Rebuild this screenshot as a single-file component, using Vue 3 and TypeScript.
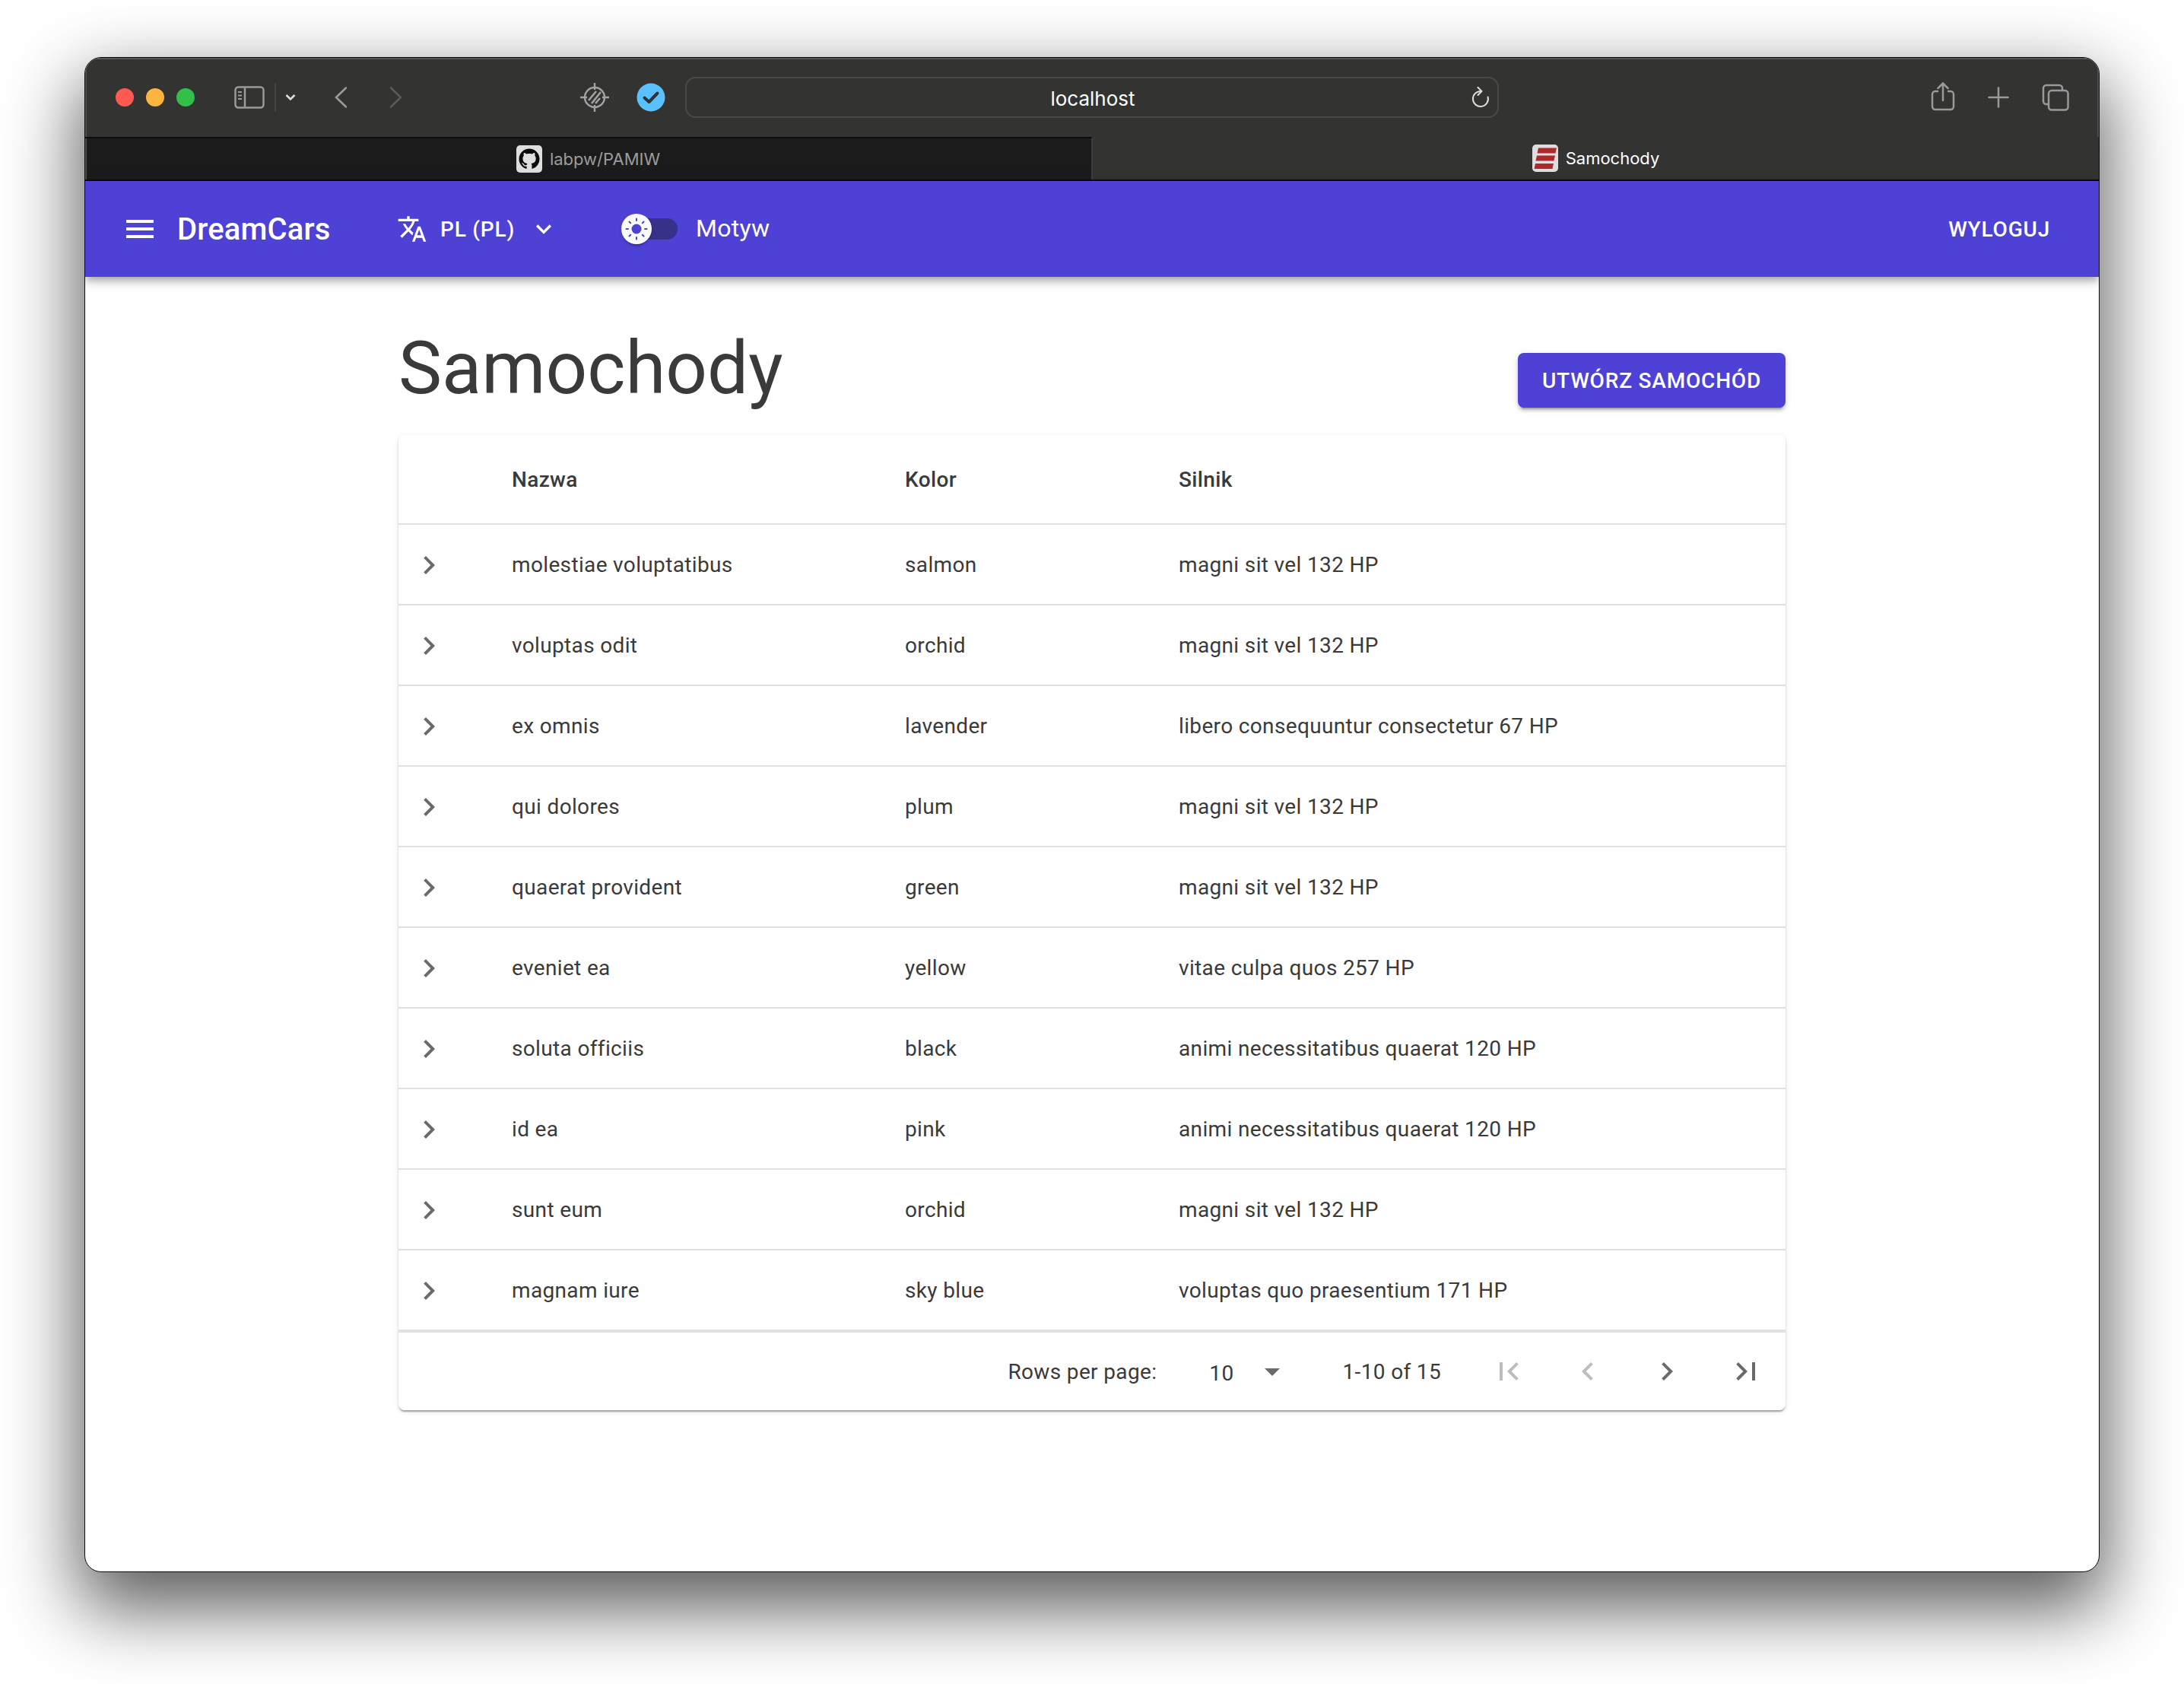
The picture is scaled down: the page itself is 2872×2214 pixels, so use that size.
<script setup lang="ts">
type Car = { name: string; color: string; engine: string };

const cars: Car[] = [
  { name: "molestiae voluptatibus", color: "salmon", engine: "magni sit vel 132 HP" },
  { name: "voluptas odit", color: "orchid", engine: "magni sit vel 132 HP" },
  { name: "ex omnis", color: "lavender", engine: "libero consequuntur consectetur 67 HP" },
  { name: "qui dolores", color: "plum", engine: "magni sit vel 132 HP" },
  { name: "quaerat provident", color: "green", engine: "magni sit vel 132 HP" },
  { name: "eveniet ea", color: "yellow", engine: "vitae culpa quos 257 HP" },
  { name: "soluta officiis", color: "black", engine: "animi necessitatibus quaerat 120 HP" },
  { name: "id ea", color: "pink", engine: "animi necessitatibus quaerat 120 HP" },
  { name: "sunt eum", color: "orchid", engine: "magni sit vel 132 HP" },
  { name: "magnam iure", color: "sky blue", engine: "voluptas quo praesentium 171 HP" },
];

const sunRays = [0, 45, 90, 135, 180, 225, 270, 315];
</script>

<template>
  <div class="screen">
    <div class="window">
      <div class="toolbar">
        <span class="dot red"></span>
        <span class="dot yellow"></span>
        <span class="dot green"></span>

        <svg class="t-sidebar" width="40" height="30" viewBox="0 0 40 30" fill="none" stroke="#9a9a9a" stroke-width="2.5">
          <rect x="1.5" y="1.5" width="37" height="27" rx="4" />
          <path d="M14 1.5v27" />
          <path d="M5 8h5M5 12.5h5M5 17h5" stroke-width="2" />
        </svg>
        <span class="t-sep"></span>
        <svg class="t-caret" width="14" height="10" viewBox="0 0 14 10" fill="none" stroke="#dcdcdc" stroke-width="2.6">
          <path d="M1.5 2l5.5 5.5L12.5 2" />
        </svg>
        <svg class="t-back" width="16" height="28" viewBox="0 0 16 28" fill="none" stroke="#9a9a9a" stroke-width="2.6" stroke-linecap="round">
          <path d="M15 1.5L2 14l13 12.5" />
        </svg>
        <svg class="t-forward" width="16" height="28" viewBox="0 0 16 28" fill="none" stroke="#5a5a5a" stroke-width="2.6" stroke-linecap="round">
          <path d="M1 1.5L14 14 1 26.5" />
        </svg>

        <svg class="t-target" width="38" height="38" viewBox="0 0 38 38" fill="none" stroke="#a3a3a3" stroke-width="2.4">
          <circle cx="19" cy="19" r="13" />
          <path d="M19 0v9M19 29v9M0 19h9M29 19h9" />
          <path d="M11 23l10-12M15 27l12-15M20 27l6-7" stroke-width="2.6" />
        </svg>
        <svg class="t-check" width="38" height="38" viewBox="0 0 38 38">
          <circle cx="19" cy="19" r="18.5" fill="#5ac0fe" />
          <path d="M10.5 19.5l6 5.5 11-11.5" fill="none" stroke="#2f3238" stroke-width="4" stroke-linecap="round" stroke-linejoin="round" />
        </svg>

        <div class="url">
          <span class="url-text">localhost</span>
          <svg class="url-reload" width="24" height="28" viewBox="0 0 24 28" fill="none" stroke="#dcdcdc" stroke-width="2" stroke-linecap="round" stroke-linejoin="round">
            <path d="M21.6 13.5A10 10 0 1 1 12 6" />
            <path d="M8.5 1l5 5-5 5" />
          </svg>
        </div>

        <svg class="t-share" width="32" height="38" viewBox="0 0 32 38" fill="none" stroke="#9a9a9a" stroke-width="2.5" stroke-linecap="round">
          <path d="M9 12H6a4 4 0 0 0-4 4v16a4 4 0 0 0 4 4h20a4 4 0 0 0 4-4V16a4 4 0 0 0-4-4h-3" />
          <path d="M16 24V2M9.5 8L16 1.5 22.5 8" />
        </svg>
        <svg class="t-plus" width="28" height="28" viewBox="0 0 28 28" fill="none" stroke="#9a9a9a" stroke-width="2.5" stroke-linecap="round">
          <path d="M14 1.5v25M1.5 14h25" />
        </svg>
        <svg class="t-tabs" width="36" height="36" viewBox="0 0 36 36" fill="none" stroke="#9a9a9a" stroke-width="2.5">
          <path d="M8 27H6a4 4 0 0 1-4-4V6a4 4 0 0 1 4-4h17a4 4 0 0 1 4 4v2" />
          <rect x="9" y="9" width="25.5" height="25.5" rx="4" />
        </svg>
      </div>

      <div class="tabs">
        <div class="tab inactive">
          <svg class="favicon" width="34" height="36" viewBox="0 0 34 36">
            <rect width="34" height="36" rx="5" fill="#dedede" />
            <g transform="translate(3.5 4.5) scale(1.69)">
              <path fill="#0b0b0b" d="M8 0C3.58 0 0 3.58 0 8c0 3.54 2.29 6.53 5.47 7.59.4.07.55-.17.55-.38 0-.19-.01-.82-.01-1.49-2.01.37-2.53-.49-2.69-.94-.09-.23-.48-.94-.82-1.13-.28-.15-.68-.52-.01-.53.63-.01 1.08.58 1.23.82.72 1.21 1.87.87 2.33.66.07-.52.28-.87.51-1.07-1.78-.2-3.64-.89-3.64-3.95 0-.87.31-1.59.82-2.15-.08-.2-.36-1.02.08-2.12 0 0 .67-.21 2.2.82.64-.18 1.32-.27 2-.27.68 0 1.36.09 2 .27 1.53-1.04 2.2-.82 2.2-.82.44 1.1.16 1.92.08 2.12.51.56.82 1.27.82 2.15 0 3.07-1.87 3.75-3.65 3.95.29.25.54.73.54 1.48 0 1.07-.01 1.93-.01 2.2 0 .21.15.46.55.38A8.013 8.013 0 0016 8c0-4.42-3.58-8-8-8z" />
            </g>
          </svg>
          <span class="tab-label">labpw/PAMIW</span>
        </div>
        <div class="tab active">
          <svg class="favicon" width="34" height="36" viewBox="0 0 34 36">
            <rect width="34" height="36" rx="5" fill="#dedede" />
            <path d="M8 4.5h24l-1.6 7H6.5zM6 14.5h24l-1.6 7H4.5zM4 25h24l-1.6 7H2.5z" fill="#ad2a2c" />
          </svg>
          <span class="tab-label">Samochody</span>
        </div>
      </div>

      <header class="appbar">
        <svg class="menu" width="48" height="48" viewBox="0 0 24 24" fill="#fff">
          <path d="M3 18h18v-2H3v2zm0-5h18v-2H3v2zm0-7v2h18V6H3z" />
        </svg>
        <span class="brand">DreamCars</span>
        <svg class="lang-icon" width="40" height="40" viewBox="0 0 24 24" fill="#fff">
          <path d="m12.87 15.07-2.54-2.51.03-.03c1.74-1.94 2.98-4.17 3.71-6.53H17V4h-7V2H8v2H1v1.99h11.17C11.5 7.92 10.44 9.75 9 11.35 8.07 10.32 7.3 9.19 6.69 8h-2c.73 1.63 1.73 3.17 2.98 4.56l-5.09 5.02L4 19l5-5 3.11 3.11.76-2.04zM18.5 10h-2L12 22h2l1.12-3h4.75L21 22h2l-4.5-12zm-2.62 7 1.62-4.33L19.12 17h-3.24z" />
        </svg>
        <span class="lang">PL (PL)</span>
        <svg class="lang-caret" width="40" height="40" viewBox="0 0 24 24" fill="#fff">
          <path d="M16.59 8.59 12 13.17 7.41 8.59 6 10l6 6 6-6z" />
        </svg>
        <div class="switch">
          <span class="track"></span>
          <span class="thumb">
            <svg width="40" height="40" viewBox="0 0 40 40">
              <circle cx="20" cy="20" r="6.5" fill="#4d41d6" />
              <rect
                v-for="a in sunRays"
                :key="a"
                x="19"
                y="5.5"
                width="2"
                height="4.5"
                rx="1"
                fill="#4d41d6"
                :transform="`rotate(${a} 20 20)`"
              />
            </svg>
          </span>
        </div>
        <span class="theme-label">Motyw</span>
        <span class="logout">Wyloguj</span>
      </header>

      <main class="content">
        <div class="title-row">
          <h1 class="title">Samochody</h1>
          <button class="create">Utwórz samochód</button>
        </div>

        <div class="card">
          <div class="row head">
            <span></span>
            <span>Nazwa</span>
            <span>Kolor</span>
            <span>Silnik</span>
          </div>
          <div v-for="car in cars" :key="car.name" class="row">
            <svg class="expand" width="48" height="48" viewBox="0 0 24 24">
              <path d="M8.59 16.59 13.17 12 8.59 7.41 10 6l6 6-6 6z" />
            </svg>
            <span>{{ car.name }}</span>
            <span>{{ car.color }}</span>
            <span>{{ car.engine }}</span>
          </div>
          <div class="footer">
            <span>Rows per page:</span>
            <span class="per-page">10</span>
            <svg class="drop" width="48" height="48" viewBox="0 0 24 24">
              <path d="m7 10 5 5 5-5z" />
            </svg>
            <span class="range">1-10 of 15</span>
            <div class="pager">
              <svg class="off" width="48" height="48" viewBox="0 0 24 24">
                <path d="M18.41 16.59 13.82 12l4.59-4.59L17 6l-6 6 6 6zM6 6h2v12H6z" />
              </svg>
              <svg class="off" width="48" height="48" viewBox="0 0 24 24">
                <path d="M15.41 16.59 10.83 12l4.58-4.59L14 6l-6 6 6 6z" />
              </svg>
              <svg width="48" height="48" viewBox="0 0 24 24">
                <path d="M8.59 16.59 13.17 12 8.59 7.41 10 6l6 6-6 6z" />
              </svg>
              <svg width="48" height="48" viewBox="0 0 24 24">
                <path d="M5.59 7.41 10.18 12l-4.59 4.59L7 18l6-6-6-6zM16 6h2v12h-2z" />
              </svg>
            </div>
          </div>
        </div>
      </main>
    </div>
  </div>
</template>

<style>
html, body { margin: 0; background: #fff; overflow: hidden; }
</style>

<style scoped>
.screen { box-sizing: border-box; width: 2872px; height: 2214px; padding: 75px 111px 147px; font-family: Roboto, "Liberation Sans", sans-serif; }
.window { box-sizing: border-box; height: 1992px; border: 1px solid #0c0c0c; border-radius: 22px; overflow: hidden; background: #fff; box-shadow: 0 40px 96px 8px rgba(0,0,0,.64); display: flex; flex-direction: column; }

.toolbar { box-sizing: border-box; height: 104px; flex: none; display: flex; align-items: center; background: #333332; padding: 0 0 0 40px; box-shadow: inset 0 2px 0 #565656, inset 2px 0 0 #4e4e4e, inset -2px 0 0 #4e4e4e; }
.dot { width: 24px; height: 24px; border-radius: 50%; margin-right: 16px; flex: none; }
.red { background: #ff5a52; }
.yellow { background: #fdb53f; }
.green { background: #32c04b; }
.toolbar svg { flex: none; }
.t-sidebar { margin-left: 36px; }
.t-sep { width: 2px; height: 36px; margin-left: 13px; background: #464646; flex: none; }
.t-caret { margin-left: 12px; }
.t-back { margin-left: 51px; }
.t-forward { margin-left: 57px; }
.t-target { margin-left: 234px; }
.t-check { margin-left: 36px; }
.url { box-sizing: border-box; width: 1070px; height: 54px; margin-left: 26px; padding-left: 2px; border: 2px solid #494949; border-radius: 14px; display: flex; align-items: center; justify-content: center; position: relative; flex: none; }
.url-text { color: #fff; font-family: Inter, "Liberation Sans", sans-serif; font-size: 26px; margin-top: 2px; }
.url-reload { position: absolute; right: 10px; top: 11px; }
.t-share { margin-left: 568px; margin-top: -2px; }
.t-plus { margin-left: 43px; }
.t-tabs { margin-left: 43px; }

.tabs { box-sizing: border-box; height: 58px; flex: none; display: flex; background: #333332; border-bottom: 2px solid #0c0c0c; }
.tab { flex: 1; display: flex; align-items: center; justify-content: center; gap: 10px; font-family: Inter, "Liberation Sans", sans-serif; font-size: 22px; }
.tab.inactive { background: #1b1b1b; color: #9b9b9b; border-top: 2px solid #0c0c0c; border-right: 2px solid #3c3c3c; box-shadow: inset 2px 0 0 #4e4e4e; }
.tab.active { color: #fff; }
.favicon { flex: none; }

.appbar { box-sizing: border-box; height: 126px; flex: none; display: flex; align-items: center; background: #4d41d6; color: #fff; padding: 0 64px 0 48px; position: relative; box-shadow: 0 4px 8px -2px rgba(0,0,0,.2), 0 8px 10px rgba(0,0,0,.14), 0 2px 20px rgba(0,0,0,.12); }
.appbar svg { flex: none; }
.brand { margin-left: 25px; font-size: 40px; font-weight: 500; letter-spacing: .15px; width: 200px; white-space: nowrap; }
.lang-icon { margin-left: 89px; }
.lang { margin-left: 17px; font-size: 28px; font-weight: 500; letter-spacing: .8px; white-space: nowrap; }
.lang-caret { margin-left: 18px; }
.switch { position: relative; width: 74px; height: 40px; margin-left: 82px; flex: none; }
.track { position: absolute; left: 6px; right: 0; top: 6px; height: 28px; border-radius: 14px; background: #37318a; }
.thumb { position: absolute; left: 0; top: 0; width: 40px; height: 40px; border-radius: 50%; background: #fafafa; box-shadow: 0 4px 2px -2px rgba(0,0,0,.2), 0 2px 4px rgba(0,0,0,.14); }
.thumb svg { display: block; }
.theme-label { margin: -2px 0 0 24px; font-size: 32px; letter-spacing: .3px; }
.logout { margin-left: auto; font-size: 28px; font-weight: 500; letter-spacing: .8px; text-transform: uppercase; }

.content { width: 1824px; margin: 0 auto; padding-top: 64px; }
.title-row { display: flex; justify-content: space-between; align-items: flex-end; margin-bottom: 32px; }
.title { margin: 0; font-size: 96px; font-weight: 400; line-height: 112px; color: #3a3a3a; }
.create { height: 72px; width: 352px; margin-bottom: 4px; padding: 0; border: 0; border-radius: 8px; background: #4d41d6; color: #fff; font-family: inherit; font-size: 28px; font-weight: 500; letter-spacing: .8px; text-transform: uppercase; box-shadow: 0 6px 2px -4px rgba(0,0,0,.2), 0 4px 4px rgba(0,0,0,.14), 0 2px 10px rgba(0,0,0,.12); }

.card { border-radius: 8px; background: #fff; box-shadow: 0 4px 2px -2px rgba(0,0,0,.2), 0 2px 2px rgba(0,0,0,.14), 0 2px 6px rgba(0,0,0,.12); color: #3a3a3a; font-size: 28px; letter-spacing: .35px; }
.row { box-sizing: border-box; height: 106px; display: grid; grid-template-columns: 149px 517px 360px 1fr; align-items: center; border-bottom: 2px solid #e0e0e0; }
.row.head { height: 118px; font-weight: 500; }
.expand { margin: 2px 0 0 16px; fill: #6a6a6a; }
.footer { box-sizing: border-box; height: 104px; display: flex; align-items: center; justify-content: flex-end; padding-right: 28px; border-top: 2px solid #e0e0e0; }
.footer svg { flex: none; fill: #6a6a6a; }
.per-page { margin-left: 69px; margin-top: 4px; }
.drop { margin-left: 27px; }
.range { margin-left: 68px; }
.pager { display: flex; gap: 56px; margin-left: 65px; }
.footer svg.off { fill: #bdbdbd; }
</style>
